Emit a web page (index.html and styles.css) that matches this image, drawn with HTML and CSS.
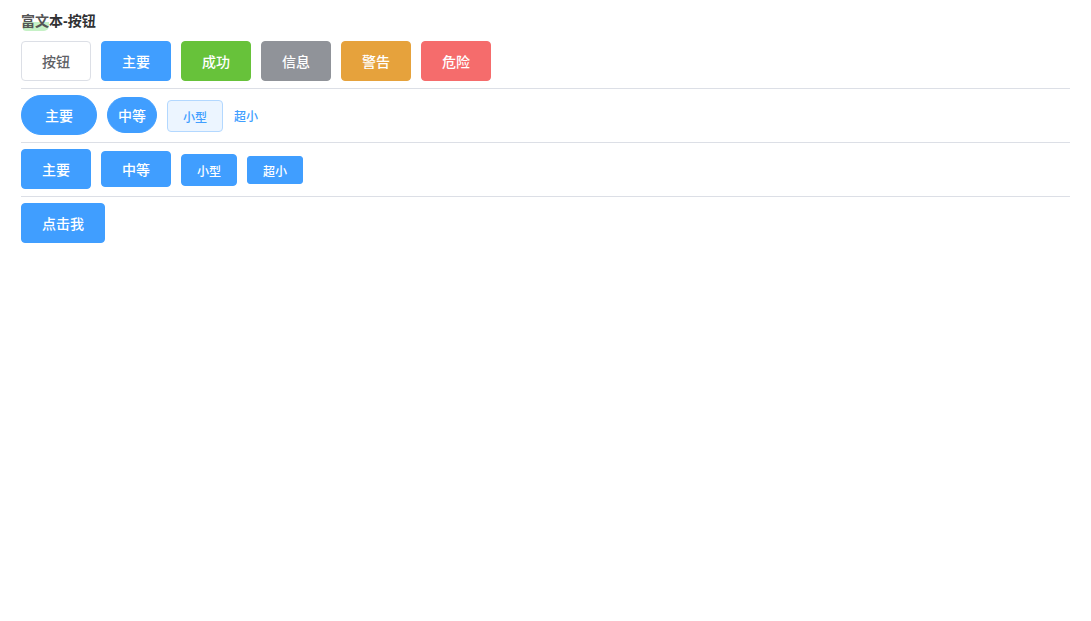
FILE: index.html
```html
<!DOCTYPE html>
<html lang="zh-CN">

<head>
    <meta charset="UTF-8">
    <title>富文本-按钮</title>
    <link rel="stylesheet" href="styles.css">
</head>

<body>
    <div class="page">
        <h3 class="title"><span class="mark">富文</span>本-按钮</h3>

        <!-- 类型 -->
        <div class="row">
            <button class="btn">按钮</button>
            <button class="btn btn_primary">主要</button>
            <button class="btn btn_success">成功</button>
            <button class="btn btn_info">信息</button>
            <button class="btn btn_warning">警告</button>
            <button class="btn btn_danger">危险</button>
        </div>
        <div class="line"></div>

        <!-- 圆角 / 朴素 / 文字 -->
        <div class="row">
            <button class="btn btn_primary round round_lg">主要</button>
            <button class="btn btn_primary round round_md">中等</button>
            <button class="btn btn_plain size_sm nudge">小型</button>
            <button class="btn btn_text">超小</button>
        </div>
        <div class="line"></div>

        <!-- 尺寸 -->
        <div class="row">
            <button class="btn btn_primary">主要</button>
            <button class="btn btn_primary size_md">中等</button>
            <button class="btn btn_primary size_sm nudge">小型</button>
            <button class="btn btn_primary size_xs nudge">超小</button>
        </div>
        <div class="line"></div>

        <div class="row">
            <button class="btn btn_primary btn_wide">点击我</button>
        </div>
    </div>
</body>

</html>
```

FILE: styles.css
```css
* {
    margin: 0;
    padding: 0;
    box-sizing: border-box;
}

body {
    font-family: "Liberation Sans", "Noto Sans CJK SC", sans-serif;
    color: #303133;
    background: #fff;
}

.page {
    padding: 11px 21px;
}

.title {
    font-size: 14px;
    line-height: 20px;
    font-weight: 700;
    margin-bottom: 10px;
}

/* 标题里的高亮 */
.mark {
    display: inline-block;
    vertical-align: top;
    line-height: 20px;
    color: #555;
    background-image: linear-gradient(#c6f1c6, #c6f1c6);
    background-repeat: no-repeat;
    background-position: 2px 11px;
    background-size: 27px 9px;
    border-radius: 0 0 5px 5px;
}

.row {
    display: flex;
    align-items: center;
    gap: 10px;
}

.line {
    height: 1px;
    background-color: #dcdfe6;
    margin: 7px 0 6px;
}

/* 按钮 */
.btn {
    width: 70px;
    height: 40px;
    font-family: inherit;
    font-size: 14px;
    font-weight: 500;
    color: #606266;
    background-color: #fff;
    border: 1px solid #dcdfe6;
    border-radius: 4px;
    cursor: pointer;
}

.btn_primary {
    color: #fff;
    background-color: #409eff;
    border-color: #409eff;
}

.btn_success {
    color: #fff;
    background-color: #67c23a;
    border-color: #67c23a;
}

.btn_info {
    color: #fff;
    background-color: #909399;
    border-color: #909399;
}

.btn_warning {
    color: #fff;
    background-color: #e6a23c;
    border-color: #e6a23c;
}

.btn_danger {
    color: #fff;
    background-color: #f56c6c;
    border-color: #f56c6c;
}

.btn_plain {
    color: #409eff;
    background-color: #ecf5ff;
    border-color: #b3d8ff;
}

.btn_text {
    width: auto;
    height: auto;
    padding: 0 1px;
    font-size: 12px;
    color: #409eff;
    background: none;
    border: none;
}

.round {
    border-radius: 20px;
}

.round_lg {
    width: 76px;
}

.round_md {
    width: 50px;
    height: 36px;
}

.size_md {
    height: 36px;
}

.size_sm {
    width: 56px;
    height: 32px;
    font-size: 12px;
}

.size_xs {
    width: 56px;
    height: 28px;
    font-size: 12px;
    border-radius: 3px;
}

.nudge {
    margin-top: 2px;
}

.btn_wide {
    width: 84px;
}
```
